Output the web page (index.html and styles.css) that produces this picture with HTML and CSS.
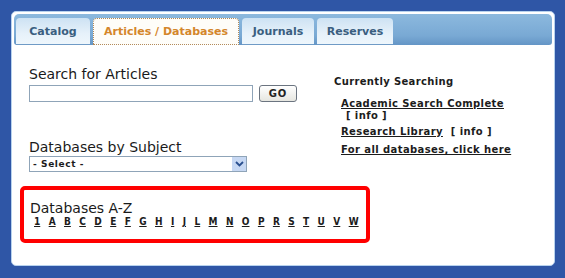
FILE: index.html
```html
<!DOCTYPE html>
<html lang="en">
<head>
  <meta charset="UTF-8">
  <title>Library Search</title>
  <link rel="stylesheet" href="styles.css">
</head>
<body>
  <div class="panel">
    <div class="tabbar">
      <a class="tab tab-catalog" href="#">Catalog</a>
      <a class="tab tab-active" href="#">Articles / Databases</a>
      <a class="tab tab-journals" href="#">Journals</a>
      <a class="tab tab-reserves" href="#">Reserves</a>
    </div>

    <div class="content">
      <div class="left-col">
        <h2 class="label">Search for Articles</h2>
        <div class="search-row">
          <input type="text" class="search-input">
          <button class="go-btn">GO</button>
        </div>

        <h2 class="label subject-label">Databases by Subject</h2>
        <div class="select-box">
          <span>- Select -</span>
          <span class="select-arrow">
            <svg width="9" height="6" viewBox="0 0 9 6"><path d="M1 1 L4.5 4.5 L8 1" fill="none" stroke="#2a4f8f" stroke-width="1.8"/></svg>
          </span>
        </div>
      </div>

      <div class="right-col">
        <h3 class="current-title">Currently Searching</h3>
        <ul class="db-list">
          <li><a href="#">Academic Search Complete</a><br><span class="info">[ info ]</span></li>
          <li><a href="#">Research Library</a> <span class="info info-inline">[ info ]</span></li>
          <li><a href="#">For all databases, click here</a></li>
        </ul>
      </div>
    </div>

    <div class="az-box">
      <h2 class="label">Databases A-Z</h2>
      <div class="az-links">
        <a href="#">1</a><a href="#">A</a><a href="#">B</a><a href="#">C</a><a href="#">D</a><a href="#">E</a><a href="#">F</a><a href="#">G</a><a href="#">H</a><a href="#">I</a><a href="#">J</a><a href="#">L</a><a href="#">M</a><a href="#">N</a><a href="#">O</a><a href="#">P</a><a href="#">R</a><a href="#">S</a><a href="#">T</a><a href="#">U</a><a href="#">V</a><a href="#">W</a>
      </div>
    </div>
  </div>
</body>
</html>
```

FILE: styles.css
```css
* {
  margin: 0;
  padding: 0;
  box-sizing: border-box;
}

body {
  background: #2f56a6;
  font-family: "DejaVu Sans", Verdana, sans-serif;
  color: #1c1c1c;
  padding: 11px 10px 12px 11px;
}

/* White panel */
.panel {
  background: #fff;
  border: 1px solid #b7d2ee;
  border-radius: 5px;
  height: 255px;
  padding: 2px;
}

/* Tabs */
.tabbar {
  height: 31px;
  background: linear-gradient(to bottom, #8cb9de, #79a9d4 70%, #6495c6);
  border-radius: 5px 5px 3px 3px;
  display: flex;
  align-items: flex-end;
  padding-left: 2px;
  gap: 3px;
}

.tab {
  height: 27px;
  display: flex;
  align-items: center;
  justify-content: center;
  font-size: 11px;
  font-weight: bold;
  letter-spacing: 0;
  color: #3a5e80;
  text-decoration: none;
  background: linear-gradient(to bottom, #cde2f3, #e6f1fa 60%, #eef6fc);
  border-radius: 4px 4px 0 0;
  border-bottom: 1px solid #6f9bc6;
}

.tab-catalog { width: 74px; }
.tab-journals { width: 72px; }
.tab-reserves { width: 76px; }

.tab-active {
  width: 146px;
  color: #d4862b;
  background: #fefdf9;
  border: 1px dotted #b28a5a;
  border-bottom: 1px dotted #b28a5a;
}

/* Main area */
.content {
  display: flex;
  padding: 21px 0 0 15px;
  height: 141px;
}

.left-col {
  width: 305px;
}

.label {
  font-size: 14px;
  font-weight: normal;
  line-height: 17px;
  color: #1a1a1a;
}

.search-row {
  display: flex;
  gap: 6px;
  margin-top: 2px;
}

.search-input {
  width: 224px;
  height: 17px;
  border: 1px solid #8fa4b8;
  background: #fff;
}

.go-btn {
  width: 38px;
  height: 17px;
  font-family: "DejaVu Sans", Verdana, sans-serif;
  font-size: 10px;
  font-weight: bold;
  letter-spacing: 1px;
  color: #222;
  border: 1px solid #6b7480;
  border-radius: 3px;
  background: linear-gradient(to bottom, #ffffff, #e6e6e0);
}

.subject-label {
  margin-top: 37px;
}

.select-box {
  width: 218px;
  height: 16px;
  border: 1px solid #8fa4b8;
  display: flex;
  align-items: center;
  justify-content: space-between;
  font-size: 9px;
  font-weight: bold;
  letter-spacing: 0.6px;
  padding-left: 3px;
}

.select-arrow {
  width: 14px;
  height: 14px;
  background: #c7d8f3;
  display: flex;
  align-items: center;
  justify-content: center;
}

/* Right column */
.right-col {
  padding-top: 9px;
}

.current-title {
  font-size: 10px;
  font-weight: bold;
  letter-spacing: 0.35px;
  line-height: 14px;
  margin-bottom: 9px;
}

.db-list {
  list-style: none;
  padding-left: 7px;
  font-size: 10px;
  font-weight: bold;
  letter-spacing: 0.4px;
  line-height: 12px;
}

.db-list li {
  margin-bottom: 4px;
}

.db-list li:nth-child(2) {
  margin-bottom: 6px;
}

.db-list a {
  color: #1c1c1c;
}

.info {
  padding-left: 5px;
}

.info-inline {
  padding-left: 4px;
}

/* A-Z box */
.az-box {
  margin: 0 0 0 6px;
  width: 350px;
  height: 57px;
  border: 4px solid #ff0000;
  border-radius: 5px;
  padding: 11px 0 0 6px;
}

.az-box .label {
  line-height: 14px;
}

.az-links {
  display: flex;
  gap: 8.4px;
  padding-left: 4px;
  margin-top: 1px;
  font-size: 10px;
  font-weight: bold;
  font-stretch: condensed;
}

.az-links a {
  color: #1c1c1c;
}
```
